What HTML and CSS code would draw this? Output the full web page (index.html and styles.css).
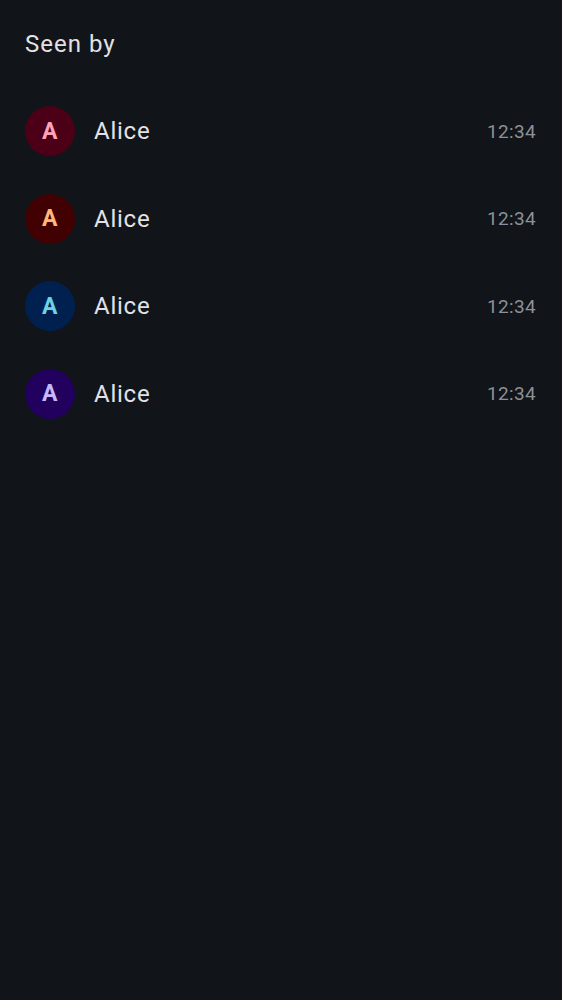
FILE: index.html
```html
<!DOCTYPE html>
<html>
<head>
<meta charset="utf-8">
<link rel="stylesheet" href="styles.css">
</head>
<body>
<div class="sheet">
  <div class="title">Seen by</div>
  <ul class="list">
    <li class="row">
      <div class="avatar pink">A</div>
      <div class="name">Alice</div>
      <div class="time">12:34</div>
    </li>
    <li class="row">
      <div class="avatar orange">A</div>
      <div class="name">Alice</div>
      <div class="time">12:34</div>
    </li>
    <li class="row">
      <div class="avatar cyan">A</div>
      <div class="name">Alice</div>
      <div class="time">12:34</div>
    </li>
    <li class="row">
      <div class="avatar violet">A</div>
      <div class="name">Alice</div>
      <div class="time">12:34</div>
    </li>
  </ul>
</div>
</body>
</html>
```
FILE: styles.css
```css
html, body {
  margin: 0;
  padding: 0;
  background: #111418;
}
body {
  font-family: Roboto, "Noto Sans", sans-serif;
  color: #e2e2e6;
  min-height: 1000px;
}
.sheet {
  padding: 0 26px 0 25px;
}
.title {
  height: 87.5px;
  display: flex;
  align-items: center;
  font-size: 24px;
  letter-spacing: 1px;
  color: #e2e2e6;
}
.list {
  list-style: none;
  margin: 0;
  padding: 0;
}
.row {
  height: 87.5px;
  display: flex;
  align-items: center;
}
.avatar {
  width: 50px;
  height: 50px;
  border-radius: 50%;
  display: flex;
  align-items: center;
  justify-content: center;
  font-size: 23px;
  font-weight: 700;
  letter-spacing: 0.5px;
  flex: none;
}
.pink { background: #4b0018; color: #ffa1b9; }
.orange { background: #410002; color: #ffb77c; }
.cyan { background: #002150; color: #6ed2e6; }
.violet { background: #22005d; color: #c6b8ff; }
.name {
  margin-left: 19px;
  font-size: 24px;
  letter-spacing: 0.75px;
  flex: 1;
}
.time {
  font-size: 19px;
  letter-spacing: 0.35px;
  color: #8c9199;
}
```
